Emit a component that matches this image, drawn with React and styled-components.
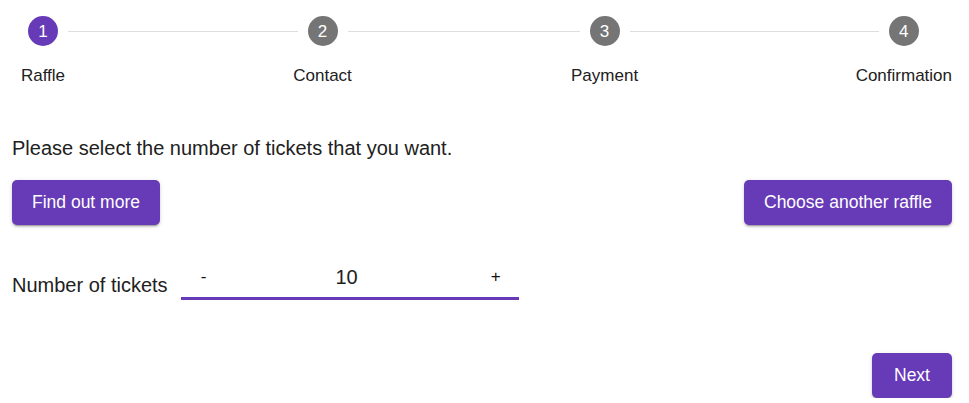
import React, { useState } from 'react';
import styled, { createGlobalStyle } from 'styled-components';

const GlobalStyle = createGlobalStyle`
  body {
    margin: 0;
    background: #ffffff;
    font-family: 'Liberation Sans', Arial, sans-serif;
    color: #212121;
  }
`;

const purple = '#673ab7';
const line = '#dedede';

const Page = styled.div`
  padding: 16px 17px 0 12px;
`;

const Stepper = styled.div`
  display: flex;
`;

const Step = styled.div`
  display: flex;
  flex-direction: column;
  align-items: center;
  min-width: 62px;
`;

const IconRow = styled.div`
  display: flex;
  align-items: center;
  align-self: stretch;
`;

const Half = styled.span`
  flex: 1;
  height: 1px;
  background: ${(p) => (p.$hidden ? 'transparent' : line)};
`;

const Circle = styled.span`
  display: flex;
  align-items: center;
  justify-content: center;
  width: 30px;
  height: 30px;
  margin: 0 10px;
  border-radius: 50%;
  background: ${(p) => (p.$active ? purple : '#757575')};
  color: #ffffff;
  font-size: 17px;
  line-height: 1;
`;

const Connector = styled.div`
  flex: 1;
  height: 1px;
  margin-top: 15px;
  background: ${line};
`;

const Label = styled.div`
  margin-top: 20px;
  font-size: 17px;
  line-height: 20px;
  color: #212121;
  white-space: nowrap;
`;

const Prompt = styled.p`
  margin: 50px 0 0;
  font-size: 20px;
  line-height: 24px;
`;

const Actions = styled.div`
  display: flex;
  justify-content: space-between;
  margin-top: 20px;
`;

const Button = styled.button`
  height: 45px;
  min-width: 80px;
  padding: 0 20px;
  border: none;
  border-radius: 5px;
  background: ${purple};
  color: #ffffff;
  font-family: inherit;
  font-size: 17.5px;
  font-weight: 500;
  cursor: pointer;
  box-shadow: 0 3px 1px -2px rgba(0, 0, 0, 0.2), 0 2px 2px 0 rgba(0, 0, 0, 0.14),
    0 1px 5px 0 rgba(0, 0, 0, 0.12);
`;

const TicketRow = styled.div`
  display: flex;
  align-items: flex-end;
  gap: 13px;
  margin-top: 32px;
`;

const TicketLabel = styled.label`
  margin-bottom: 3px;
  font-size: 20px;
  line-height: 24px;
`;

const Field = styled.div`
  display: flex;
  align-items: center;
  width: 338px;
  height: 40px;
  border-bottom: 3px solid ${purple};
`;

const Adjust = styled.button`
  width: 46px;
  height: 100%;
  padding: 0;
  border: none;
  background: none;
  color: #111111;
  font-family: inherit;
  font-size: 17px;
  cursor: pointer;
`;

const Count = styled.input`
  flex: 1;
  min-width: 0;
  padding: 0 6px 0 0;
  border: none;
  outline: none;
  background: transparent;
  text-align: center;
  font-family: inherit;
  font-size: 20px;
  color: #212121;
  caret-color: ${purple};
`;

const Footer = styled.div`
  display: flex;
  justify-content: flex-end;
  margin-top: 53px;
`;

const steps = ['Raffle', 'Contact', 'Payment', 'Confirmation'];

export default function App() {
  const [count, setCount] = useState(10);

  return (
    <Page>
      <GlobalStyle />
      <Stepper>
        {steps.map((name, i) => (
          <React.Fragment key={name}>
            {i > 0 && <Connector />}
            <Step>
              <IconRow>
                <Half $hidden={i === 0} />
                <Circle $active={i === 0}>{i + 1}</Circle>
                <Half $hidden={i === steps.length - 1} />
              </IconRow>
              <Label>{name}</Label>
            </Step>
          </React.Fragment>
        ))}
      </Stepper>

      <Prompt>Please select the number of tickets that you want.</Prompt>

      <Actions>
        <Button>Find out more</Button>
        <Button>Choose another raffle</Button>
      </Actions>

      <TicketRow>
        <TicketLabel htmlFor="tickets">Number of tickets</TicketLabel>
        <Field>
          <Adjust onClick={() => setCount((c) => Math.max(1, c - 1))}>-</Adjust>
          <Count
            id="tickets"
            autoFocus
            value={count}
            onChange={(e) => setCount(Number(e.target.value) || 0)}
          />
          <Adjust onClick={() => setCount((c) => c + 1)}>+</Adjust>
        </Field>
      </TicketRow>

      <Footer>
        <Button>Next</Button>
      </Footer>
    </Page>
  );
}
